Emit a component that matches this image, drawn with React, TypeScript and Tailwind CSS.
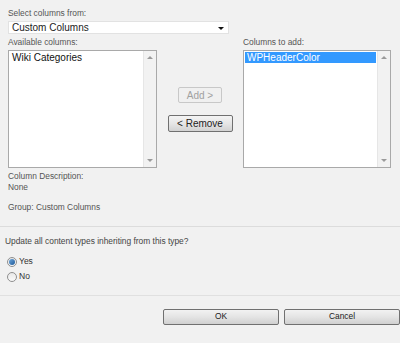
import React from "react";

function Scrollbar() {
  return (
    <div className="w-[13px] h-full bg-[#f2f2f2] border-l border-[#e6e6e6] flex flex-col items-center justify-between py-[5px]">
      <div className="w-0 h-0 border-l-[3px] border-r-[3px] border-b-[3px] border-l-transparent border-r-transparent border-b-[#9a9a9a]" />
      <div className="w-0 h-0 border-l-[3px] border-r-[3px] border-t-[3px] border-l-transparent border-r-transparent border-t-[#9a9a9a]" />
    </div>
  );
}

function ListBox({ children }: { children: React.ReactNode }) {
  return (
    <div className="h-[118px] bg-white border border-[#a9a9a9] flex">
      <div className="flex-1 pt-[1px] px-[1px]">{children}</div>
      <Scrollbar />
    </div>
  );
}

function Radio({ checked, label }: { checked?: boolean; label: string }) {
  return (
    <div className="flex items-center h-[14px] pl-[7px]">
      <div className="w-[10px] h-[10px] rounded-full border border-[#8f8f8f] bg-gradient-to-b from-[#e8e8e8] to-[#fafafa] flex items-center justify-center">
        {checked && <div className="w-[6px] h-[6px] rounded-full bg-gradient-to-br from-[#6fa8dc] to-[#1c5a9a]" />}
      </div>
      <span className="ml-[2px] text-[8.5px] text-[#333]">{label}</span>
    </div>
  );
}

export default function App() {
  return (
    <div
      className="w-[400px] h-[343px] bg-[#f1f1f1] overflow-hidden text-[#4a4a4a]"
      style={{ fontFamily: '"Liberation Sans", Arial, sans-serif' }}
    >
      <div className="px-[8px] pt-[8px]">
        <div className="text-[8.4px] leading-[10px] text-[#555]">Select columns from:</div>
        <div className="mt-[3px] w-[221px] h-[13px] bg-white border border-[#e2e2e2] flex items-center justify-between pl-[3px] pr-[4px]">
          <span className="text-[10px] leading-[11px] text-[#222]">Custom Columns</span>
          <div className="w-0 h-0 border-l-[3px] border-r-[3px] border-t-[3px] border-l-transparent border-r-transparent border-t-[#111] mt-[2px]" />
        </div>

        <div className="mt-[3px] flex">
          <div className="w-[149px]">
            <div className="text-[8.4px] leading-[10px] text-[#555] mb-[3px]">Available columns:</div>
            <ListBox>
              <div className="text-[10px] leading-[11px] text-[#111] px-[2px]">Wiki Categories</div>
            </ListBox>
          </div>

          <div className="w-[86px] flex flex-col items-center pt-[50px]">
            <div className="w-[44px] h-[16px] border border-[#c8c8c8] rounded-[2px] bg-[#f0f0f0] flex items-center justify-center text-[10px] text-[#a0a0a0]">
              Add &gt;
            </div>
            <div className="mt-[12px] w-[65px] h-[17px] border border-[#707070] rounded-[2px] bg-gradient-to-b from-[#f4f4f4] via-[#e6e6e6] to-[#d2d2d2] flex items-center justify-center text-[10px] text-[#222]">
              &lt; Remove
            </div>
          </div>

          <div className="w-[148px]">
            <div className="text-[8.4px] leading-[10px] text-[#555] mb-[3px]">Columns to add:</div>
            <ListBox>
              <div className="text-[10px] leading-[11px] text-white bg-[#3399ff] px-[2px] h-[11px]">WPHeaderColor</div>
            </ListBox>
          </div>
        </div>

        <div className="mt-[3px] text-[8.4px] leading-[10.5px] text-[#555]">
          <div>Column Description:</div>
          <div>None</div>
          <div className="mt-[10px]">Group: Custom Columns</div>
        </div>
      </div>

      <div className="mt-[13px] border-t border-[#dcdcdc]" />

      <div className="px-[5px] pt-[9px] text-[8.4px] leading-[10px] text-[#444]">
        Update all content types inheriting from this type?
      </div>
      <div className="mt-[9px] flex flex-col gap-[1px]">
        <Radio checked label="Yes" />
        <Radio label="No" />
      </div>

      <div className="mt-[11px] border-t border-[#e0e0e0]" />

      <div className="mt-[13px] flex justify-end gap-[5px] pr-[0px]">
        <div className="w-[116px] h-[16px] border border-[#707070] rounded-[2px] bg-gradient-to-b from-[#f2f2f2] via-[#e4e4e4] to-[#d0d0d0] flex items-center justify-center text-[8.4px] text-[#222]">
          OK
        </div>
        <div className="w-[116px] h-[16px] border border-[#707070] rounded-[2px] bg-gradient-to-b from-[#f2f2f2] via-[#e4e4e4] to-[#d0d0d0] flex items-center justify-center text-[8.4px] text-[#222]">
          Cancel
        </div>
      </div>
    </div>
  );
}
